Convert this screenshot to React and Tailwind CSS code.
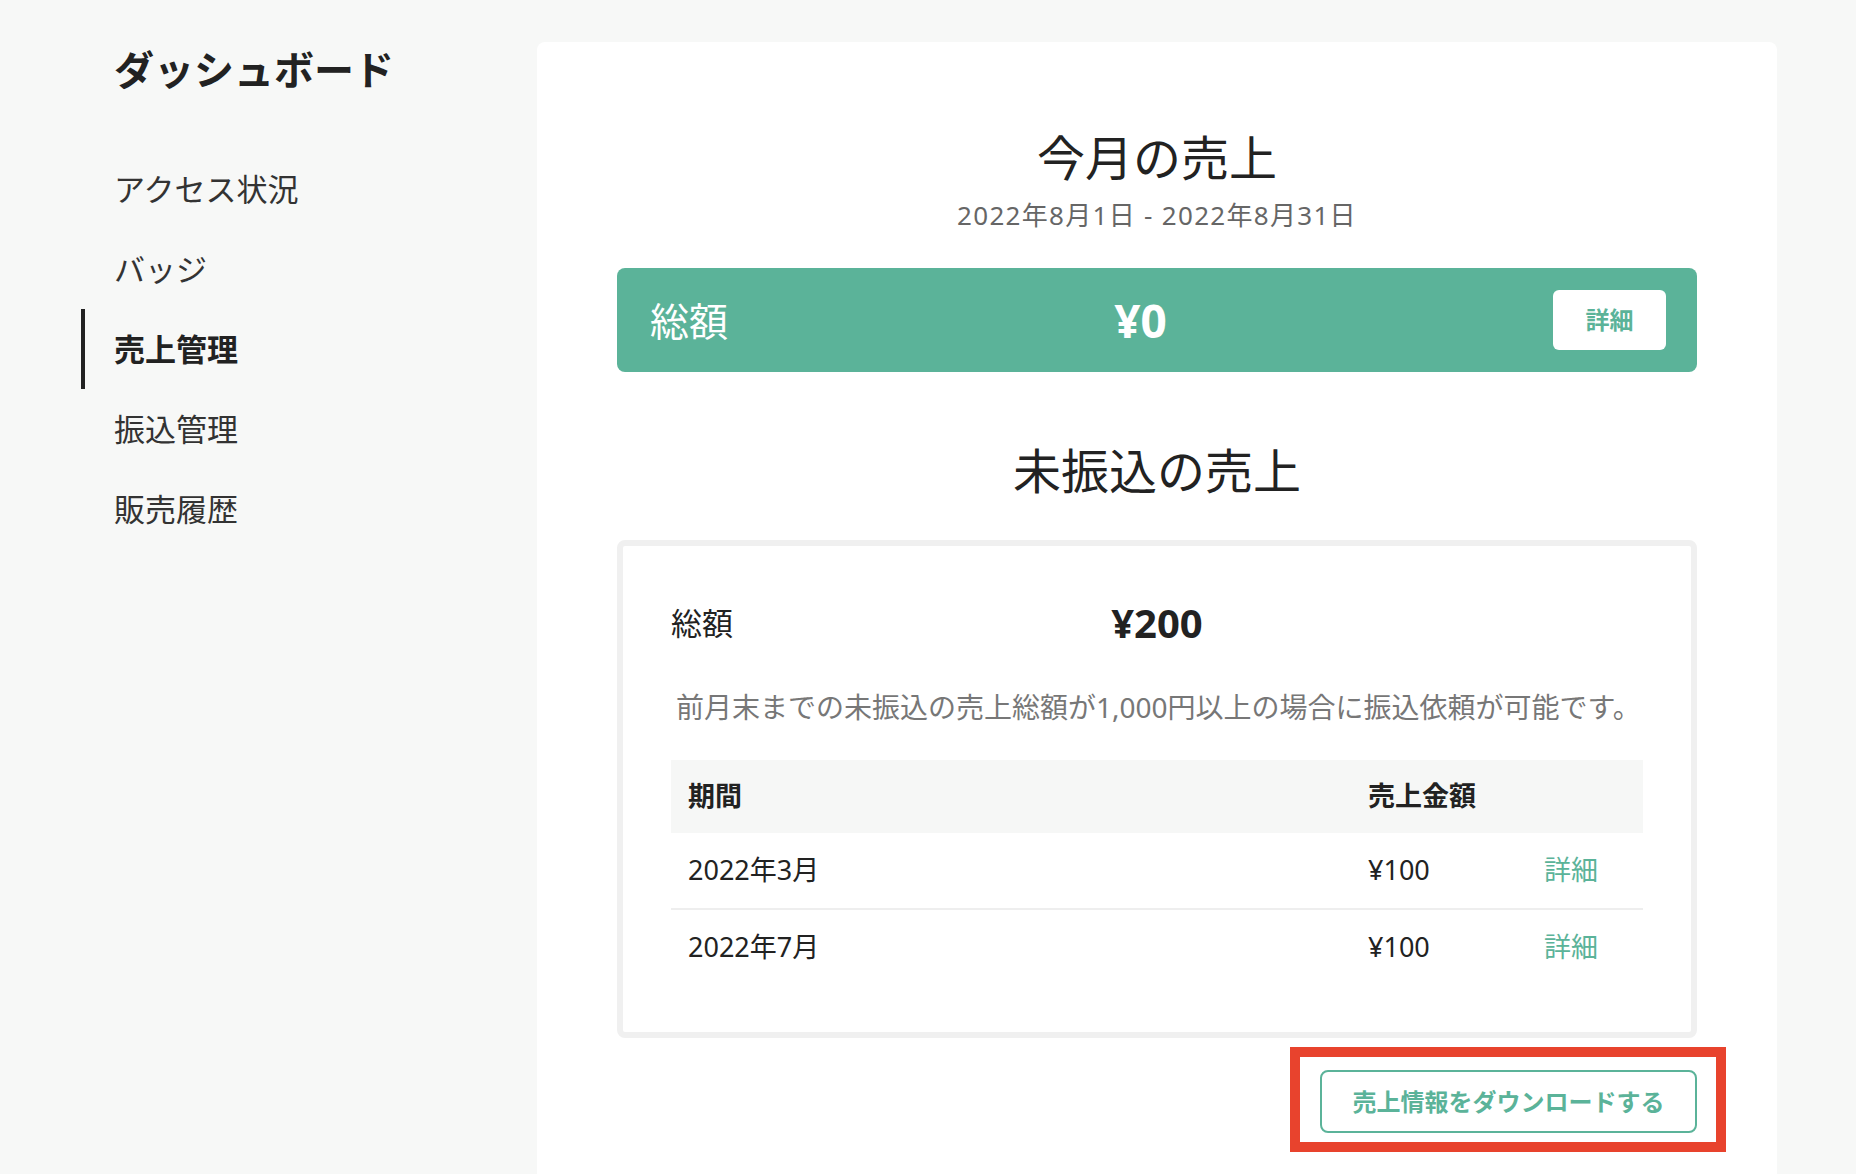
export default function App() {
    const navItems = ['アクセス状況', 'バッジ', '売上管理', '振込管理', '販売履歴'];
    const rows = [
        { period: '2022年3月', amount: '¥100' },
        { period: '2022年7月', amount: '¥100' },
    ];

    return (
        <div className="flex h-[1174px] overflow-hidden bg-[#f7f8f7] font-['Noto_Sans','Noto_Sans_CJK_JP',sans-serif] text-[#222]">
            {/* --- SIDEBAR --- */}
            <aside className="w-[537px] shrink-0 pt-[46px]">
                <h1 className="pl-[114px] text-[40px] font-bold leading-[48px] text-[#222]">
                    ダッシュボード
                </h1>
                <nav className="mt-[55px] ml-[81px] flex flex-col">
                    {navItems.map((item) => (
                        <a
                            key={item}
                            href="#"
                            className={
                                item === '売上管理'
                                    ? 'flex h-[80px] items-center border-l-4 border-[#222] pl-[29px] text-[31px] font-bold text-[#222]'
                                    : 'flex h-[80px] items-center border-l-4 border-transparent pl-[29px] text-[31px] text-[#333]'
                            }
                        >
                            {item}
                        </a>
                    ))}
                </nav>
            </aside>

            {/* --- MAIN CARD --- */}
            <main className="mt-[42px] h-[1200px] w-[1240px] shrink-0 rounded-t-lg bg-white px-[80px] pt-[87px]">
                <div className="text-center">
                    <h2 className="text-[48px] leading-[58px] text-[#222]">今月の売上</h2>
                    <p className="mt-[12px] text-[26px] leading-[32px] tracking-[0.05em] text-[#666]">
                        2022年8月1日 - 2022年8月31日
                    </p>
                </div>

                {/* 今月の総額 */}
                <div className="mt-[37px] flex h-[104px] items-center justify-between rounded-lg bg-[#5bb399] pl-[33px] pr-[31px] text-white">
                    <span className="text-[39px] leading-none">総額</span>
                    <span className="text-[46px] font-bold leading-none">¥0</span>
                    <button className="flex h-[60px] w-[113px] items-center justify-center rounded-md bg-white text-[24px] font-bold text-[#5bb399]">
                        詳細
                    </button>
                </div>

                <h2 className="mt-[70px] text-center text-[48px] leading-[58px] text-[#222]">未振込の売上</h2>

                {/* 未振込の売上 */}
                <div className="mt-[40px] rounded-lg border-[6px] border-[#f0f0f0] px-[48px] pt-[53px] pb-[47px]">
                    <div className="relative flex h-[48px] items-center">
                        <span className="text-[31px] text-[#222]">総額</span>
                        <span className="absolute left-1/2 -translate-x-1/2 text-[40px] font-bold text-[#222]">¥200</span>
                    </div>
                    <p className="mt-[42px] pl-[5px] text-[28px] leading-[36px] text-[#777]">
                        前月末までの未振込の売上総額が1,000円以上の場合に振込依頼が可能です。
                    </p>

                    <div className="mt-[35px]">
                        <div className="grid h-[73px] grid-cols-[680px_176px_1fr] items-center bg-[#f6f7f6] pl-[17px] text-[27px] font-bold text-[#222]">
                            <span>期間</span>
                            <span>売上金額</span>
                            <span></span>
                        </div>
                        {rows.map((row, i) => (
                            <div
                                key={row.period}
                                className={
                                    i === 0
                                        ? 'grid h-[77px] grid-cols-[680px_176px_1fr] items-center border-b-2 border-[#eeeeee] pl-[17px] text-[27px] text-[#222]'
                                        : 'grid h-[75px] grid-cols-[680px_176px_1fr] items-center pl-[17px] text-[27px] text-[#222]'
                                }
                            >
                                <span>{row.period}</span>
                                <span>{row.amount}</span>
                                <a href="#" className="text-[#5bb399]">詳細</a>
                            </div>
                        ))}
                    </div>
                </div>

                {/* --- DOWNLOAD --- */}
                <div className="mt-[32px] flex justify-end">
                    <div className="relative">
                        <button className="flex h-[63px] w-[377px] items-center justify-center rounded-lg border-2 border-[#5bb399] bg-white text-[24px] font-bold text-[#5bb399]">
                            売上情報をダウンロードする
                        </button>
                        <div className="pointer-events-none absolute -top-[23px] -right-[29px] -bottom-[19px] -left-[30px] border-[10px] border-[#e8432d]"></div>
                    </div>
                </div>
            </main>
        </div>
    );
}
